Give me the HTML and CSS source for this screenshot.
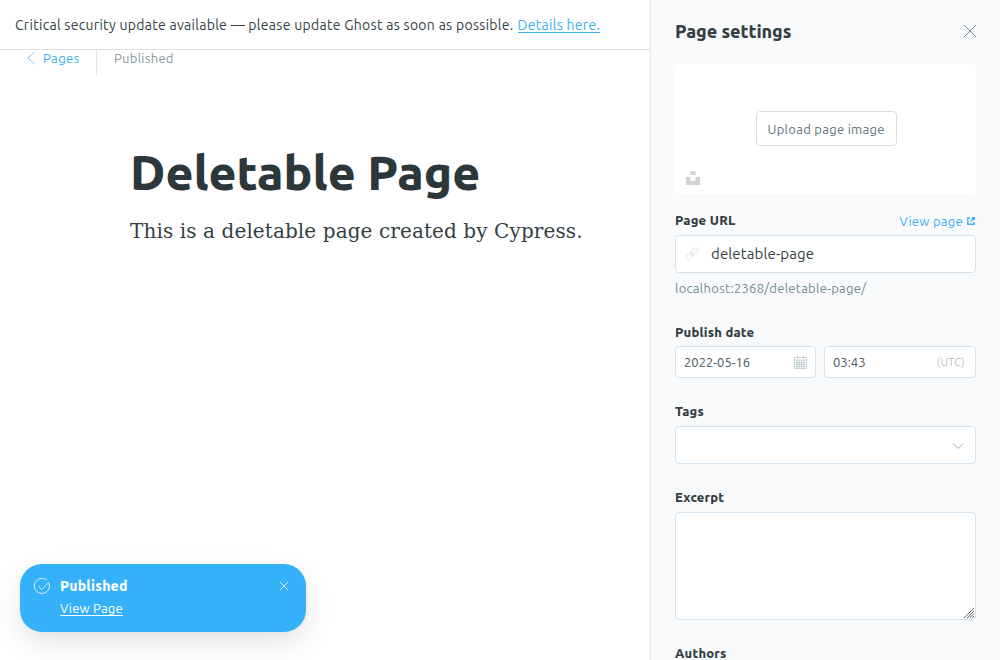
FILE: index.html
```html
<!DOCTYPE html>
<html lang="en">
<head>
<meta charset="utf-8">
<title>Page settings</title>
<link rel="stylesheet" href="styles.css">
</head>
<body>
<div class="app">
  <main class="editor">
    <div class="alert"><span class="alert-text">Critical security update available — please update Ghost as soon as possible.</span><a class="alert-link" href="#">Details here.</a></div>
    <header class="toolbar">
      <a class="back" href="#">
        <svg class="back-icon" viewBox="0 0 8 12"><path d="M7.500 0 .8 6l6.700 6"/></svg>
        <span class="back-label">Pages</span>
      </a>
      <span class="status">Published</span>
    </header>
    <article class="content">
      <h1 class="title">Deletable Page</h1>
      <p class="body-text">This is a deletable page created by Cypress.</p>
    </article>
    <aside class="toast">
      <svg class="toast-check" viewBox="0 0 16 16"><path d="M14.900 5.200A7.500 7.500 0 1 1 12.900 2.300M4.300 8.200l3.300 3.400L15 4.200"/></svg>
      <div class="toast-body">
        <span class="toast-title">Published</span>
        <a class="toast-link" href="#">View Page</a>
      </div>
      <svg class="toast-close" viewBox="0 0 8 8"><path d="m0 0 8 8M8 0 0 8"/></svg>
    </aside>
  </main>
  <section class="settings">
    <header class="settings-head">
      <h2 class="settings-title">Page settings</h2>
      <svg class="settings-close" viewBox="0 0 12 12"><path d="m0 0 12 12M12 0 0 12"/></svg>
    </header>
    <div class="uploader">
      <button class="upload-button"><span class="upload-label">Upload page image</span></button>
      <svg class="unsplash" viewBox="0 0 14 14"><path d="M4.400 0h5.200v4H4.400zM0 6h4.400v4h5.200V6H14v8H0z"/></svg>
    </div>
    <div class="field field-url">
      <div class="label-row">
        <label class="label label-url">Page URL</label>
        <a class="view-link" href="#"><span class="view-label">View page</span>
          <svg class="external" viewBox="0 0 8 8"><path d="M3 1H.8v6.200h6.200V5M4.800.8h2.500v2.500M7.200.8 3.600 4.400"/></svg></a>
      </div>
      <div class="input input-url">
        <svg class="link-icon" viewBox="0 0 14 14"><g transform="rotate(-45 7 7)"><rect x="-.8" y="4.600" width="8.600" height="4.800" rx="2.400"/><rect x="6.200" y="4.600" width="8.600" height="4.800" rx="2.400"/><path d="M4 7h6"/></g></svg>
        <span class="slug">deletable-page</span>
      </div>
      <p class="hint">localhost:2368/deletable-page/</p>
    </div>
    <div class="field field-date">
      <label class="label label-date">Publish date</label>
      <div class="date-row">
        <div class="input input-date"><span class="date">2022-05-16</span>
          <svg class="calendar" viewBox="0 0 13 14"><path d="M.5 2.500h12v11H.5zM.5 5h12M3 5v8M5.300 5v8M7.600 5v8M10 5v8M1.500 7.500h10M1.500 9.500h10M1.500 11.500h10M3.500.5v3M9.500.5v3"/></svg>
        </div>
        <div class="input input-time"><span class="time">03:43</span><span class="utc">(UTC)</span></div>
      </div>
    </div>
    <div class="field field-tags">
      <label class="label label-tags">Tags</label>
      <div class="input input-tags"><svg class="chevron" viewBox="0 0 10 6"><path d="M0 .5 5 5.500 10 .5"/></svg></div>
    </div>
    <div class="field field-excerpt">
      <label class="label label-excerpt" for="excerpt">Excerpt</label>
      <div class="excerpt-box">
        <textarea class="excerpt" id="excerpt"></textarea>
        <svg class="grip" viewBox="0 0 10 10"><path d="M0 10 10 0M3 10l7-7M5.500 10 10 5.500M8 10l2-2"/></svg>
      </div>
    </div>
    <label class="label label-authors">Authors</label>
  </section>
</div>
</body>
</html>
```
FILE: styles.css
```css
* { box-sizing: border-box; }
body { margin: 0; overflow: hidden; background: #fff; color: #394047; font-family: Ubuntu, "Noto Sans", sans-serif; font-size: 13px; letter-spacing: .28px; }
a { text-decoration: none; color: #3eb0ef; }
h1, h2, p { margin: 0; font-weight: 700; }
svg { display: block; flex: none; overflow: visible; fill: none; stroke: currentColor; }
span, .label, .alert-link, .toast-link, h1, h2, p { white-space: nowrap; }

.app { display: flex; width: 1000px; height: 660px; overflow: hidden; }
.editor { position: relative; width: 650px; height: 660px; flex: none; }
.alert { display: flex; gap: 4px; height: 50px; padding: 15px; border-bottom: 1px solid #dcdfe1; line-height: 20px; font-size: 14px; letter-spacing: .29px; color: #343f44; }
.alert-link { height: 18px; border-bottom: 1px solid #3eb0ef; }
.toolbar { display: flex; height: 25px; line-height: 17px; }
.back { display: flex; width: 97px; padding-left: 27px; gap: 8px; border-right: 1px solid #dfe8f1; letter-spacing: .4px; }
.back-icon { width: 8px; height: 12px; margin-top: 2px; stroke-width: .7; }
.status { padding-left: 17px; color: #8799a3; }
.content { padding: 67px 0 0 130px; }
.title { height: 60px; line-height: 60px; font-size: 48px; font-weight: 800; letter-spacing: 0; color: #2c373c; }
.body-text { margin-top: 12px; font: 400 20px/34px "DejaVu Serif", serif; letter-spacing: .1px; color: #343f44; }

.toast { position: absolute; left: 20px; top: 564px; width: 286px; height: 68px; display: flex; padding: 12px 18px 0 14px; border-radius: 22px; background: #35b1fa; color: #fff; box-shadow: 0 1px 5px rgba(0,0,0,.04), 0 12px 30px rgba(0,0,0,.1); }
.toast-check { width: 16px; height: 16px; margin-top: 2px; stroke-width: .8; }
.toast-body { display: flex; flex-direction: column; align-items: flex-start; flex: 1; margin-left: 10px; letter-spacing: .2px; }
.toast-title { height: 23px; line-height: 20px; font-size: 14px; font-weight: 800; }
.toast-link { height: 17px; line-height: 18px; border-bottom: 1px solid #fff; color: #fff; }
.toast-close { width: 8px; height: 8px; margin-top: 6px; stroke-width: .8; }

.settings { width: 350px; height: 660px; padding: 0 24px; border-left: 1px solid #e1eaf1; background: #f9fafc; overflow: hidden; }
.settings-head { display: flex; justify-content: space-between; height: 64px; padding-top: 19px; }
.settings-title { line-height: 25px; font-size: 18px; font-weight: 800; letter-spacing: -.06px; color: #343f44; }
.settings-close { width: 12px; height: 12px; margin-top: 6px; stroke: #626d79; stroke-width: .8; }
.uploader { display: flex; flex-direction: column; height: 130px; padding: 47px 0 0 11px; border-radius: 4px; background: #fff; }
.upload-button { align-self: center; width: 141px; height: 35px; margin-right: 10px; padding: 1px 0 0 11px; border: 1px solid #d3dfe7; border-radius: 4px; background: #fff; color: #5e747e; font: 13px/32px Ubuntu, "Noto Sans", sans-serif; letter-spacing: .29px; text-align: left; }
.unsplash { width: 14px; height: 14px; margin-top: 25px; fill: #d3d3d3; stroke: none; }
.label { display: block; font-size: 13px; line-height: 18px; font-weight: 800; letter-spacing: .2px; color: #343f44; }
.field-url { height: 129px; padding-top: 18px; }
.label-row { display: flex; justify-content: space-between; height: 23px; }
.label-url, .label-tags, .label-excerpt, .label-authors { line-height: 16px; }
.view-link { display: flex; gap: 4px; line-height: 19px; }
.external { width: 8px; height: 8px; margin: 5px 1px 0 0; stroke-width: 1.4; }
.input { display: flex; align-items: center; height: 38px; border: 1px solid #d3e2ec; border-radius: 4px; background: #fff; }
.input-url { padding-left: 9px; }
.link-icon { width: 14px; height: 14px; stroke: #d3dee3; stroke-width: .8; }
.slug { margin-left: 12px; line-height: 20px; font-size: 15px; letter-spacing: .12px; color: #343f44; }
.hint { margin-top: 6px; line-height: 19px; font-weight: 400; color: #738a94; }
.field-date { height: 80px; }
.date-row { display: flex; gap: 8px; margin-top: 5px; }
.input-date, .input-time { justify-content: space-between; height: 32px; padding: 0 8px; letter-spacing: 0; color: #46545b; }
.input-date { width: 141px; }
.input-time { flex: 1; padding-right: 10px; }
.calendar { width: 13px; height: 14px; stroke: #b3c0c6; stroke-width: .7; }
.utc { color: #a9b7bd; font-size: 11px; font-weight: 300; letter-spacing: .28px; }
.field-tags { height: 86px; }
.input-tags { justify-content: flex-end; margin-top: 7px; padding: 1px 12px 0 0; }
.chevron { width: 10px; height: 6px; stroke: #90a4ae; stroke-width: .9; }
.field-excerpt { height: 156px; }
.excerpt-box { position: relative; margin-top: 7px; }
.excerpt { display: block; width: 301px; height: 108px; border: 1px solid #d3e2ec; border-radius: 4px; background: #fff; resize: none; outline: none; }
.grip { position: absolute; right: 2px; bottom: 2px; width: 10px; height: 10px; stroke: #666; stroke-width: 1; }
```
